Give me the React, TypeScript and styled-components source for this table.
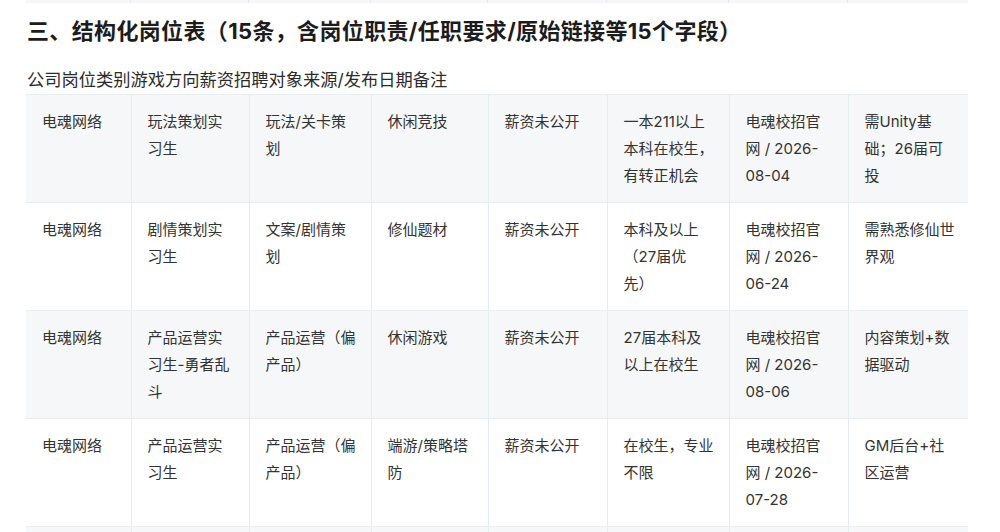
import React from "react";
import styled, { createGlobalStyle } from "styled-components";

const GlobalStyle = createGlobalStyle`
  html, body {
    margin: 0;
    padding: 0;
    background: #ffffff;
  }
  body {
    font-family: Inter, "Noto Sans CJK SC", sans-serif;
    color: #333333;
    -webkit-font-smoothing: antialiased;
    text-spacing-trim: space-all;
  }
`;

const COLS = [105, 118, 122, 117, 119, 122, 119, 120];

const Page = styled.div`
  width: 942px;
  padding: 0 32px 0 26px;
  overflow: hidden;
  height: 532px;
`;

const TableTail = styled.div`
  display: grid;
  grid-template-columns: ${COLS.map((c) => `${c}px`).join(" ")};
  height: 3px;
  background: #f6f7f8;
`;

const TailCell = styled.div`
  border-right: 1px solid #e6edf1;
  &:last-child {
    border-right: none;
  }
`;

const Heading = styled.h3`
  margin: 13px 0 0 1px;
  font-size: 22px;
  line-height: 30px;
  font-weight: 700;
  color: #1c1c1c;
  letter-spacing: 0.35px;
  text-spacing-trim: space-all;
`;

const Caption = styled.p`
  margin: 21px 0 1px 1px;
  font-size: 17.25px;
  line-height: 26px;
  color: #2b2b2b;
`;

const Table = styled.table`
  width: 942px;
  table-layout: fixed;
  border-collapse: collapse;
  font-size: 15px;
  line-height: 27px;
  color: #333333;
  text-spacing-trim: space-all;
`;

const Row = styled.tr<{ $alt: boolean }>`
  background: ${(p) => (p.$alt ? "#f6f7f8" : "#ffffff")};
  border-top: 1px solid #e8eef2;
`;

const Cell = styled.td`
  padding: 13px 13px 13px 16px;
  vertical-align: top;
  border-right: 1px solid #e6edf1;
  word-break: normal;
  overflow-wrap: break-word;
  &:last-child {
    border-right: none;
  }
`;

const rows: string[][] = [
  [
    "电魂网络",
    "玩法策划实习生",
    "玩法/关卡策划",
    "休闲竞技",
    "薪资未公开",
    "一本211以上本科在校生，有转正机会",
    "电魂校招官网 / 2026-\u200B08-04",
    "需Unity基础；26届可投",
  ],
  [
    "电魂网络",
    "剧情策划实习生",
    "文案/剧情策划",
    "修仙题材",
    "薪资未公开",
    "本科及以上（27届优先）",
    "电魂校招官网 / 2026-\u200B06-24",
    "需熟悉修仙世界观",
  ],
  [
    "电魂网络",
    "产品运营实习生-勇者乱斗",
    "产品运营（偏产品）",
    "休闲游戏",
    "薪资未公开",
    "27届本科及以上在校生",
    "电魂校招官网 / 2026-\u200B08-06",
    "内容策划+数据驱动",
  ],
  [
    "电魂网络",
    "产品运营实习生",
    "产品运营（偏产品）",
    "端游/策略塔防",
    "薪资未公开",
    "在校生，专业不限",
    "电魂校招官网 / 2026-\u200B07-28",
    "GM后台+社区运营",
  ],
  [
    "电魂网络",
    "数值策划实习生",
    "数值策划",
    "休闲竞技",
    "薪资未公开",
    "本科及以上在校生",
    "电魂校招官网 / 2026-\u200B07-15",
    "需较强数据分析能力",
  ],
];

export default function App() {
  return (
    <>
      <GlobalStyle />
      <Page>
        <TableTail>
          {COLS.map((_, i) => (
            <TailCell key={i} />
          ))}
        </TableTail>
        <Heading>三、结构化岗位表（15条，含岗位职责/任职要求/原始链接等15个字段）</Heading>
        <Caption>公司岗位类别游戏方向薪资招聘对象来源/发布日期备注</Caption>
        <Table>
          <colgroup>
            {COLS.map((w, i) => (
              <col key={i} style={{ width: w }} />
            ))}
          </colgroup>
          <tbody>
            {rows.map((r, i) => (
              <Row key={i} $alt={i % 2 === 0}>
                {r.map((c, j) => (
                  <Cell key={j}>{c}</Cell>
                ))}
              </Row>
            ))}
          </tbody>
        </Table>
      </Page>
    </>
  );
}
